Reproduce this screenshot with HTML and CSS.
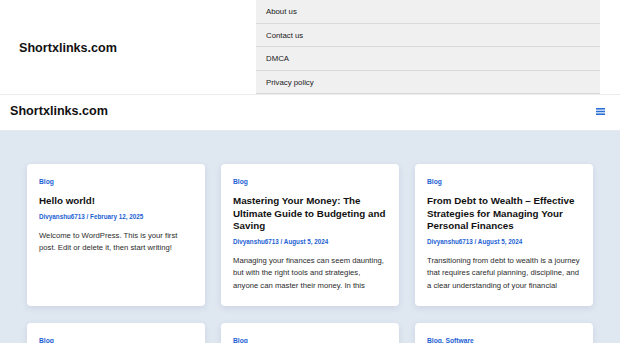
FILE: index.html
```html
<!DOCTYPE html>
<html lang="en">
<head>
  <meta charset="UTF-8">
  <title>Shortxlinks.com</title>
  <link rel="stylesheet" href="styles.css">
</head>
<body>

  <div class="topbar">
    <div class="topbar-brand">Shortxlinks.com</div>
    <ul class="top-menu">
      <li><a href="#">About us</a></li>
      <li><a href="#">Contact us</a></li>
      <li><a href="#">DMCA</a></li>
      <li><a href="#">Privacy policy</a></li>
    </ul>
  </div>

  <header class="site-header">
    <a class="brand" href="#">Shortxlinks.com</a>
    <button class="menu-toggle" aria-label="Menu">
      <svg width="9" height="7" viewBox="0 0 9 7">
        <rect x="0" y="0" width="9" height="1.6" fill="#2b6fd6"/>
        <rect x="0" y="2.7" width="9" height="1.6" fill="#2b6fd6"/>
        <rect x="0" y="5.4" width="9" height="1.6" fill="#2b6fd6"/>
      </svg>
    </button>
  </header>

  <main class="posts">
    <article class="card">
      <div class="cat">Blog</div>
      <h2>Hello world!</h2>
      <div class="meta">Divyanshu6713 / February 12, 2025</div>
      <p>Welcome to WordPress. This is your first post. Edit or delete it, then start writing!</p>
    </article>
    <article class="card">
      <div class="cat">Blog</div>
      <h2>Mastering Your Money: The Ultimate Guide to Budgeting and Saving</h2>
      <div class="meta">Divyanshu6713 / August 5, 2024</div>
      <p>Managing your finances can seem daunting, but with the right tools and strategies, anyone can master their money. In this</p>
    </article>
    <article class="card">
      <div class="cat">Blog</div>
      <h2>From Debt to Wealth – Effective Strategies for Managing Your Personal Finances</h2>
      <div class="meta">Divyanshu6713 / August 5, 2024</div>
      <p>Transitioning from debt to wealth is a journey that requires careful planning, discipline, and a clear understanding of your financial</p>
    </article>
    <article class="card">
      <div class="cat">Blog</div>
    </article>
    <article class="card">
      <div class="cat">Blog</div>
    </article>
    <article class="card">
      <div class="cat">Blog, Software</div>
    </article>
  </main>

</body>
</html>
```

FILE: styles.css
```css
* {
  box-sizing: border-box;
}
body {
  font-family: 'Liberation Sans', Arial, sans-serif;
  margin: 0;
  padding: 0;
  background: #dfe7f1;
  color: #222;
  height: 343px;
  overflow: hidden;
}
a {
  color: inherit;
  text-decoration: none;
}
.topbar {
  background: #fff;
  display: flex;
  height: 94px;
}
.topbar-brand {
  width: 256px;
  padding-left: 19px;
  padding-top: 2px;
  align-self: center;
  font-weight: bold;
  font-size: 12.6px;
  color: #111;
}
.top-menu {
  list-style: none;
  margin: 0;
  padding: 0;
  width: 344px;
  background: #f0f0f0;
}
.top-menu li {
  border-bottom: 1px solid #d9d9d9;
}
.top-menu a {
  display: block;
  height: 22.5px;
  line-height: 23px;
  padding-left: 10px;
  font-size: 7.8px;
  color: #1a1a1a;
}
.site-header {
  background: #fff;
  border-top: 1px solid #ececec;
  border-bottom: 1px solid #e6e9ee;
  height: 37px;
  display: flex;
  align-items: center;
  justify-content: space-between;
  padding: 0 15px 3px 10px;
}
.brand {
  font-weight: bold;
  font-size: 12.6px;
  color: #111;
}
.menu-toggle {
  background: none;
  border: none;
  padding: 0;
  display: flex;
  cursor: pointer;
}
.posts {
  display: grid;
  grid-template-columns: repeat(3, 178px);
  gap: 17px 16px;
  justify-content: center;
  padding-top: 33px;
}
.card {
  background: #fff;
  border-radius: 4px;
  box-shadow: 0 2px 6px rgba(40, 60, 90, 0.1);
  padding: 13px 12px 14px 12px;
}
.cat {
  font-size: 6.7px;
  font-weight: bold;
  line-height: 10px;
  color: #1c5fd4;
}
.card h2 {
  margin: 8px 0 0;
  font-size: 9.8px;
  line-height: 12.5px;
  color: #111;
}
.meta {
  margin-top: 4.5px;
  font-size: 6.3px;
  font-weight: bold;
  line-height: 9px;
  color: #1c5fd4;
}
.card p {
  margin: 8.5px 0 0;
  font-size: 7.7px;
  line-height: 12.5px;
  color: #2b2b2b;
}
```
